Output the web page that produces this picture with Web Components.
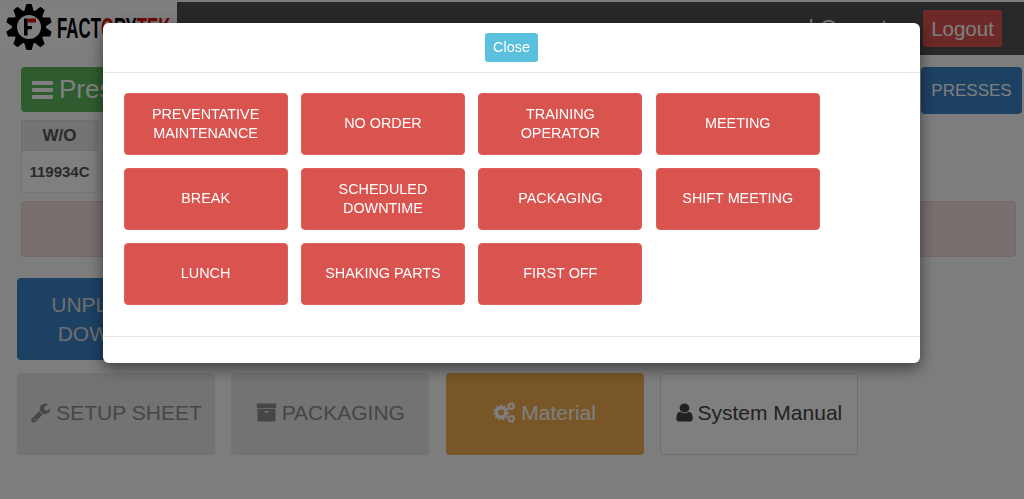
<!DOCTYPE html>
<html>
<head>
<meta charset="utf-8">
<title>FactoryTek</title>
<style>
  html, body { margin: 0; height: 100%; }
  body { background: #fafafa; font-family: "Liberation Sans", Arial, sans-serif; overflow: hidden; }
</style>
</head>
<body>
<fk-navbar></fk-navbar>
<fk-main></fk-main>
<fk-modal>
  <fk-reason>PREVENTATIVE MAINTENANCE</fk-reason>
  <fk-reason>NO ORDER</fk-reason>
  <fk-reason>TRAINING OPERATOR</fk-reason>
  <fk-reason>MEETING</fk-reason>
  <fk-reason>BREAK</fk-reason>
  <fk-reason>SCHEDULED DOWNTIME</fk-reason>
  <fk-reason>PACKAGING</fk-reason>
  <fk-reason>SHIFT MEETING</fk-reason>
  <fk-reason>LUNCH</fk-reason>
  <fk-reason>SHAKING PARTS</fk-reason>
  <fk-reason>FIRST OFF</fk-reason>
</fk-modal>

<script>
// iconos FontAwesome 4 (viewBox 1792)
const ICONS = {
  wrench: "M448 1472q0-26-19-45t-45-19-45 19-19 45 19 45 45 19 45-19 19-45zm644-420l-682 682q-37 37-90 37-52 0-91-37l-106-108q-38-36-38-90 0-53 38-91l681-681q39 98 114.5 173.5t173.5 114.5zm634-435q0 39-23 106-47 134-164.5 217.5t-258.5 83.5q-185 0-316.5-131.5t-131.5-316.5 131.5-316.5 316.5-131.5q58 0 121.5 16.5t107.5 46.5q16 11 16 28t-16 28l-293 169v224l193 107q5-3 79-48.5t135.5-81 70.5-35.5q15 0 23.5 10t8.5 25z",
  archive: "M1088 832q0-26-19-45t-45-19h-256q-26 0-45 19t-19 45 19 45 45 19h256q26 0 45-19t19-45zm576-192v960q0 26-19 45t-45 19h-1408q-26 0-45-19t-19-45v-960q0-26 19-45t45-19h1408q26 0 45 19t19 45zm64-448v256q0 26-19 45t-45 19h-1536q-26 0-45-19t-19-45v-256q0-26 19-45t45-19h1536q26 0 45 19t19 45z",
  user: "M1536 1399q0 109-62.5 187t-150.5 78h-854q-88 0-150.5-78t-62.5-187q0-85 8.5-160.5t31.5-152 58.5-131 94-89 134.5-34.5q131 128 313 128t313-128q76 0 134.5 34.5t94 89 58.5 131 31.5 152 8.5 160.5zm-256-887q0 159-112.5 271.5t-271.5 112.5-271.5-112.5-112.5-271.5 112.5-271.5 271.5-112.5 271.5 112.5 112.5 271.5z"
};

function gear(cx, cy, r, w) {
  const dash = (2 * Math.PI * r / 16).toFixed(2);
  return `<circle cx="${cx}" cy="${cy}" r="${r}" fill="none" stroke="currentColor" stroke-width="${w}"/>
    <circle cx="${cx}" cy="${cy}" r="${r + w * .55}" fill="none" stroke="currentColor" stroke-width="${w * .7}" stroke-dasharray="${dash}"/>`;
}

// -------- cabecera --------
class FkNavbar extends HTMLElement {
  constructor() {
    super();
    this.attachShadow({ mode: "open" });
    this.shadowRoot.innerHTML = `
      <style>
        :host { display: flex; justify-content: space-between; height: 53px; margin-top: 2px;
                background: #505050; }
        .brand { display: flex; align-items: flex-start; width: 177px; background: #fff; }
        .brand svg { width: 48px; height: 48px; margin: 1px 0 0 5px; flex: none; }
        .word { font: bold 29px/1 "Liberation Sans", sans-serif; color: #000; flex: none;
                margin: 12px 0 0 4px; transform: scaleX(.58); transform-origin: 0 0; white-space: nowrap; }
        .word b { color: #e01010; }
        .user { display: flex; align-items: flex-start; gap: 16px; padding: 8px 22px 0 0; }
        .who { color: #fff; font-size: 22px; line-height: 36px; }
        .logout { background: #d9534f; color: #fff; font-size: 20.5px; line-height: 37px; width: 79px;
                  text-align: center; border-radius: 2px; }
      </style>
      <div class="brand">
        <svg viewBox="0 0 48 48">
          <g transform="translate(24 24)">
            <g fill="#000">
              ${[...Array(10).keys()].map(i => `<path transform="rotate(${i * 36})" d="M-2.6-23h5.2l2.4 8h-10z"/>`).join("")}
            </g>
            <circle r="14.5" fill="none" stroke="#000" stroke-width="5"/>
            <path d="M-5-8.5h3.6v17h-3.6z M-1.5-1h4.5v3.2h-4.5z" fill="#000"/>
            <path d="M-1-8.5h8v4h-8z" fill="#d01010"/>
          </g>
        </svg>
        <div class="word">FACT<b>O</b>RY<b>TEK</b></div>
      </div>
      <div class="user">
        <span class="who">| Operator</span>
        <span class="logout">Logout</span>
      </div>
    `;
  }
}

// -------- botón de acción grande --------
class FkAction extends HTMLElement {
  constructor() {
    super();
    this.attachShadow({ mode: "open" });
    this.shadowRoot.innerHTML = `
      <style>
        :host { display: flex; align-items: center; justify-content: center; gap: 5px; box-sizing: border-box;
                width: 198px; height: 82px; border-radius: 4px; font-size: 21px; line-height: 29px; text-align: center;
                padding-bottom: 3px; background: #eee; color: #8c8c8c; }
        :host([kind=blue]) { background: #3a82c4; color: #ddd; padding: 0 24px; }
        :host([kind=muted]) { background: #e6e6e6; color: #8c8c8c; }
        :host([kind=orange]) { background: #f0ad4e; color: #fff; }
        :host([kind=plain]) { background: #fff; color: #444; border: 1px solid #ddd; }
      </style>
      <slot name="icon"></slot><span><slot></slot></span>
    `;
  }
  connectedCallback() {
    const name = this.getAttribute("icon");
    if (name) {
      const holder = document.createElement("span");
      holder.slot = "icon";
      holder.style.cssText = "display:flex";
      if (name === "cogs") {
        holder.innerHTML = `<svg viewBox="0 0 24 24" width="23" height="23" style="fill:none">${gear(8.5, 12, 5, 3.6)}${gear(19, 5.5, 2.5, 2)}${gear(19, 18.5, 2.5, 2)}</svg>`;
      } else if (name === "user") {
        holder.innerHTML = `<svg viewBox="232 96 1328 1600" width="17" height="19" preserveAspectRatio="none" fill="currentColor"><path d="${ICONS[name]}"/></svg>`;
      } else {
        holder.innerHTML = `<svg viewBox="0 0 1792 1792" width="21" height="21" fill="currentColor"><path d="${ICONS[name]}"/></svg>`;
      }
      this.appendChild(holder);
    }
  }
}

// -------- contenido detrás del modal --------
class FkMain extends HTMLElement {
  constructor() {
    super();
    this.attachShadow({ mode: "open" });
    this.shadowRoot.innerHTML = `
      <style>
        :host { display: block; padding: 12px 2px 0 21px; }
        .top { display: flex; justify-content: space-between; align-items: flex-start; }
        .presses-title { display: flex; align-items: center; gap: 6px; box-sizing: border-box; height: 45px; width: 240px;
                 padding-left: 11px; background: #5cb85c; color: #fff; font-size: 26px; border-radius: 4px; }
        .presses-title i { display: grid; gap: 3px; width: 21px; }
        .presses-title i b { height: 4px; background: currentColor; border-radius: 1px; }
        .presses { box-sizing: border-box; width: 101px; height: 47px; line-height: 47px; text-align: center;
                   background: #3a82c4; color: #fff; font-size: 17px; border-radius: 4px; }
        table { border-collapse: collapse; margin-top: 6px; color: #555; }
        th { width: 75px; height: 29px; background: #e8e8e8; font-size: 17px; border: 1px solid #ddd; padding: 0; }
        td { height: 41px; background: #fff; font-size: 15px; font-weight: bold; border: 1px solid #e8e8e8; text-align: center; padding: 0; }
        .alert { box-sizing: border-box; height: 56px; margin: 8px 6px 0 0; background: #f2dede;
                 border: 1px solid #ebccd1; border-radius: 4px; }
        .unplanned { margin: 21px 0 0 -4px; }
        .row { display: flex; gap: 16.3px; margin: 13px 0 0 -4px; }
      </style>
      <div class="top">
        <div class="presses-title"><i><b></b><b></b><b></b></i>Presses</div>
        <div class="presses">PRESSES</div>
      </div>
      <table>
        <tr><th>W/O</th></tr>
        <tr><td>119934C</td></tr>
      </table>
      <div class="alert"></div>
      <fk-action class="unplanned" kind="blue">UNPLANNED DOWNTIME</fk-action>
      <div class="row">
        <fk-action kind="muted" icon="wrench">SETUP SHEET</fk-action>
        <fk-action kind="muted" icon="archive">PACKAGING</fk-action>
        <fk-action kind="orange" icon="cogs">Material</fk-action>
        <fk-action kind="plain" icon="user">System Manual</fk-action>
      </div>
    `;
  }
}

// -------- botón de motivo dentro del modal --------
class FkReason extends HTMLElement {
  constructor() {
    super();
    this.attachShadow({ mode: "open" });
    this.shadowRoot.innerHTML = `
      <style>
        :host { display: flex; align-items: center; justify-content: center; box-sizing: border-box;
                height: 62px; padding: 0 20px 1px; background: #d9534f; border: 1px solid #dd5f5b;
                border-radius: 4px; color: #fff; font-size: 14.4px; line-height: 19px; text-align: center; }
      </style>
      <slot></slot>
    `;
  }
}

class FkModal extends HTMLElement {
  constructor() {
    super();
    this.attachShadow({ mode: "open" });
    this.shadowRoot.innerHTML = `
      <style>
        :host { display: block; }
        .backdrop { position: fixed; inset: 0; background: rgba(0,0,0,.5); }
        .dialog { position: fixed; left: 103px; top: 23px; width: 817px; height: 340px; display: flex;
                  flex-direction: column; background: #fff; border-radius: 6px; overflow: hidden;
                  box-shadow: 0 5px 15px rgba(0,0,0,.5); }
        .head { display: flex; justify-content: center; align-items: center; height: 49px;
                border-bottom: 1px solid #e5e5e5; flex: none; }
        .close { width: 53px; height: 29px; line-height: 29px; text-align: center; background: #5bc0de;
                 border-radius: 3px; color: #fff; font-size: 14.4px; }
        .body { flex: 1; display: grid; grid-template-columns: repeat(4, 164px); grid-auto-rows: 62px;
                column-gap: 13.4px; row-gap: 13px; padding: 20px 20.6px; align-content: start; }
        .foot { height: 26px; border-top: 1px solid #e5e5e5; flex: none; }
      </style>
      <div class="backdrop"></div>
      <div class="dialog">
        <div class="head"><span class="close">Close</span></div>
        <div class="body"><slot></slot></div>
        <div class="foot"></div>
      </div>
    `;
  }
}

customElements.define("fk-navbar", FkNavbar);
customElements.define("fk-action", FkAction);
customElements.define("fk-main", FkMain);
customElements.define("fk-reason", FkReason);
customElements.define("fk-modal", FkModal);
</script>
</body>
</html>
